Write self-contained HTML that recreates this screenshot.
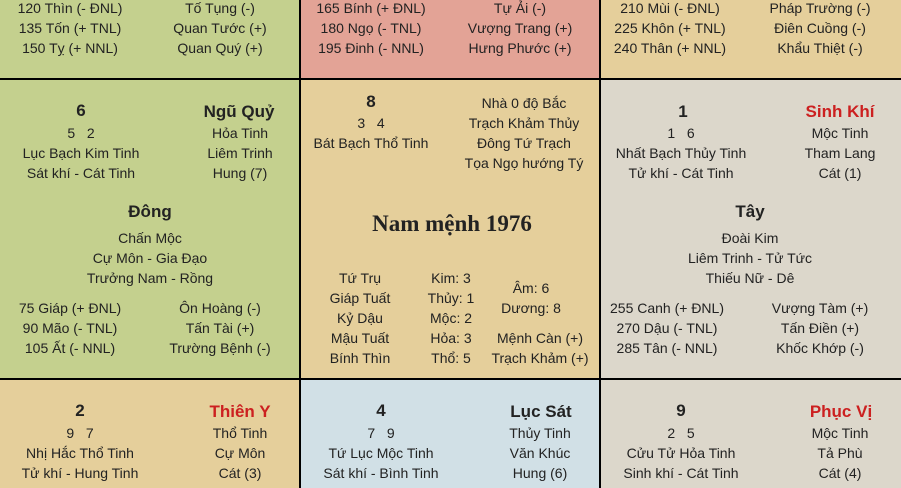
<!DOCTYPE html><html><head><meta charset="utf-8"><style>
body{margin:0;width:901px;height:488px;overflow:hidden;background:#000;position:relative;font-family:"Liberation Sans",Arial,sans-serif;font-size:14px;color:#222}
.c{position:absolute}
.t{position:absolute;transform:translateX(-50%);white-space:nowrap;line-height:16px}
.b{font-weight:bold;font-size:17px;line-height:20px}
.r{color:#cc2020}
.ttl{font-family:"Liberation Serif",serif;font-weight:bold;font-size:23px;line-height:26px}
</style></head><body>
<div class="c" style="left:0;top:0;width:299px;height:78px;background:#c4d08e"></div>
<div class="c" style="left:301px;top:0;width:298px;height:78px;background:#e3a396"></div>
<div class="c" style="left:601px;top:0;width:300px;height:78px;background:#e5cf9b"></div>
<div class="c" style="left:0;top:80px;width:299px;height:298px;background:#c4d08e"></div>
<div class="c" style="left:301px;top:80px;width:298px;height:298px;background:#e5cf9b"></div>
<div class="c" style="left:601px;top:80px;width:300px;height:298px;background:#dcd7cb"></div>
<div class="c" style="left:0;top:380px;width:299px;height:108px;background:#e5cf9b"></div>
<div class="c" style="left:301px;top:380px;width:298px;height:108px;background:#d1e0e6"></div>
<div class="c" style="left:601px;top:380px;width:300px;height:108px;background:#dcd7cb"></div>

<div class="t" style="left:70px;top:0">120 Thìn (- ĐNL)</div>
<div class="t" style="left:70px;top:20px">135 Tốn (+ TNL)</div>
<div class="t" style="left:70px;top:40px">150 Tỵ (+ NNL)</div>
<div class="t" style="left:220px;top:0">Tố Tụng (-)</div>
<div class="t" style="left:220px;top:20px">Quan Tước (+)</div>
<div class="t" style="left:220px;top:40px">Quan Quý (+)</div>
<div class="t" style="left:371px;top:0">165 Bính (+ ĐNL)</div>
<div class="t" style="left:371px;top:20px">180 Ngọ (- TNL)</div>
<div class="t" style="left:371px;top:40px">195 Đinh (- NNL)</div>
<div class="t" style="left:520px;top:0">Tự Ải (-)</div>
<div class="t" style="left:520px;top:20px">Vượng Trang (+)</div>
<div class="t" style="left:520px;top:40px">Hưng Phước (+)</div>
<div class="t" style="left:670px;top:0">210 Mùi (- ĐNL)</div>
<div class="t" style="left:670px;top:20px">225 Khôn (+ TNL)</div>
<div class="t" style="left:670px;top:40px">240 Thân (+ NNL)</div>
<div class="t" style="left:820px;top:0">Pháp Trường (-)</div>
<div class="t" style="left:820px;top:20px">Điên Cuồng (-)</div>
<div class="t" style="left:820px;top:40px">Khẩu Thiệt (-)</div>

<div class="t b" style="left:81px;top:101px">6</div>
<div class="t" style="left:81px;top:125px">5&nbsp;&nbsp;&nbsp;2</div>
<div class="t" style="left:81px;top:145px">Lục Bạch Kim Tinh</div>
<div class="t" style="left:81px;top:165px">Sát khí - Cát Tinh</div>
<div class="t b" style="left:239px;top:102px">Ngũ Quỷ</div>
<div class="t" style="left:240px;top:125px">Hỏa Tinh</div>
<div class="t" style="left:240px;top:145px">Liêm Trinh</div>
<div class="t" style="left:240px;top:165px">Hung (7)</div>
<div class="t b" style="left:150px;top:202px">Đông</div>
<div class="t" style="left:150px;top:230px">Chấn Mộc</div>
<div class="t" style="left:150px;top:250px">Cự Môn - Gia Đạo</div>
<div class="t" style="left:150px;top:270px">Trưởng Nam - Rồng</div>
<div class="t" style="left:70px;top:300px">75 Giáp (+ ĐNL)</div>
<div class="t" style="left:70px;top:320px">90 Mão (- TNL)</div>
<div class="t" style="left:70px;top:340px">105 Ất (- NNL)</div>
<div class="t" style="left:220px;top:300px">Ôn Hoàng (-)</div>
<div class="t" style="left:220px;top:320px">Tấn Tài (+)</div>
<div class="t" style="left:220px;top:340px">Trường Bệnh (-)</div>

<div class="t b" style="left:371px;top:92px">8</div>
<div class="t" style="left:371px;top:115px">3&nbsp;&nbsp;&nbsp;4</div>
<div class="t" style="left:371px;top:135px">Bát Bạch Thổ Tinh</div>
<div class="t" style="left:524px;top:95px">Nhà 0 độ Bắc</div>
<div class="t" style="left:524px;top:115px">Trạch Khảm Thủy</div>
<div class="t" style="left:524px;top:135px">Đông Tứ Trạch</div>
<div class="t" style="left:524px;top:155px">Tọa Ngọ hướng Tý</div>
<div class="t ttl" style="left:452px;top:211px">Nam mệnh 1976</div>
<div class="t" style="left:360px;top:270px">Tứ Trụ</div>
<div class="t" style="left:360px;top:290px">Giáp Tuất</div>
<div class="t" style="left:360px;top:310px">Kỷ Dậu</div>
<div class="t" style="left:360px;top:330px">Mậu Tuất</div>
<div class="t" style="left:360px;top:350px">Bính Thìn</div>
<div class="t" style="left:451px;top:270px">Kim: 3</div>
<div class="t" style="left:451px;top:290px">Thủy: 1</div>
<div class="t" style="left:451px;top:310px">Mộc: 2</div>
<div class="t" style="left:451px;top:330px">Hỏa: 3</div>
<div class="t" style="left:451px;top:350px">Thổ: 5</div>
<div class="t" style="left:531px;top:280px">Âm: 6</div>
<div class="t" style="left:531px;top:300px">Dương: 8</div>
<div class="t" style="left:540px;top:330px">Mệnh Càn (+)</div>
<div class="t" style="left:540px;top:350px">Trạch Khảm (+)</div>

<div class="t b" style="left:683px;top:102px">1</div>
<div class="t" style="left:681px;top:125px">1&nbsp;&nbsp;&nbsp;6</div>
<div class="t" style="left:681px;top:145px">Nhất Bạch Thủy Tinh</div>
<div class="t" style="left:681px;top:165px">Tử khí - Cát Tinh</div>
<div class="t b r" style="left:840px;top:102px">Sinh Khí</div>
<div class="t" style="left:840px;top:125px">Mộc Tinh</div>
<div class="t" style="left:840px;top:145px">Tham Lang</div>
<div class="t" style="left:840px;top:165px">Cát (1)</div>
<div class="t b" style="left:750px;top:202px">Tây</div>
<div class="t" style="left:750px;top:230px">Đoài Kim</div>
<div class="t" style="left:750px;top:250px">Liêm Trinh - Tử Tức</div>
<div class="t" style="left:750px;top:270px">Thiếu Nữ - Dê</div>
<div class="t" style="left:667px;top:300px">255 Canh (+ ĐNL)</div>
<div class="t" style="left:667px;top:320px">270 Dậu (- TNL)</div>
<div class="t" style="left:667px;top:340px">285 Tân (- NNL)</div>
<div class="t" style="left:820px;top:300px">Vượng Tàm (+)</div>
<div class="t" style="left:820px;top:320px">Tấn Điền (+)</div>
<div class="t" style="left:820px;top:340px">Khốc Khớp (-)</div>

<div class="t b" style="left:80px;top:401px">2</div>
<div class="t" style="left:80px;top:425px">9&nbsp;&nbsp;&nbsp;7</div>
<div class="t" style="left:80px;top:445px">Nhị Hắc Thổ Tinh</div>
<div class="t" style="left:80px;top:465px">Tử khí - Hung Tinh</div>
<div class="t b r" style="left:240px;top:402px">Thiên Y</div>
<div class="t" style="left:240px;top:425px">Thổ Tinh</div>
<div class="t" style="left:240px;top:445px">Cự Môn</div>
<div class="t" style="left:240px;top:465px">Cát (3)</div>
<div class="t b" style="left:381px;top:401px">4</div>
<div class="t" style="left:381px;top:425px">7&nbsp;&nbsp;&nbsp;9</div>
<div class="t" style="left:381px;top:445px">Tứ Lục Mộc Tinh</div>
<div class="t" style="left:381px;top:465px">Sát khí - Bình Tinh</div>
<div class="t b" style="left:541px;top:402px">Lục Sát</div>
<div class="t" style="left:540px;top:425px">Thủy Tinh</div>
<div class="t" style="left:540px;top:445px">Văn Khúc</div>
<div class="t" style="left:540px;top:465px">Hung (6)</div>
<div class="t b" style="left:681px;top:401px">9</div>
<div class="t" style="left:681px;top:425px">2&nbsp;&nbsp;&nbsp;5</div>
<div class="t" style="left:681px;top:445px">Cửu Tử Hỏa Tinh</div>
<div class="t" style="left:681px;top:465px">Sinh khí - Cát Tinh</div>
<div class="t b r" style="left:841px;top:402px">Phục Vị</div>
<div class="t" style="left:840px;top:425px">Mộc Tinh</div>
<div class="t" style="left:840px;top:445px">Tả Phù</div>
<div class="t" style="left:840px;top:465px">Cát (4)</div>
</body></html>
